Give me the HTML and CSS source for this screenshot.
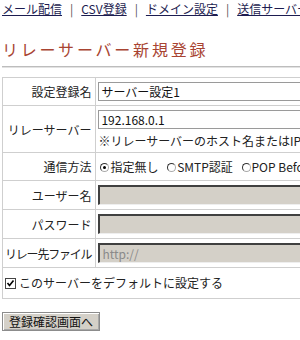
FILE: index.html
```html
<!DOCTYPE html>
<html lang="ja">
<head>
    <meta charset="UTF-8">
    <title>リレーサーバー新規登録</title>
    <link rel="stylesheet" href="styles.css">
</head>
<body>
    <div class="nav">
        <a href="#">メール配信</a><span class="sep">|</span><a href="#">CSV登録</a><span class="sep">|</span><a href="#">ドメイン設定</a><span class="sep">|</span><a href="#">送信サーバー設定</a>
    </div>
    <h1 class="title">リレーサーバー新規登録</h1>
    <div class="rule"></div>
    <table class="form">
        <tr>
            <th>設定登録名</th>
            <td><input class="text" type="text" value="サーバー設定1"></td>
        </tr>
        <tr>
            <th>リレーサーバー</th>
            <td>
                <input class="text" type="text" value="192.168.0.1">
                <div class="note">※リレーサーバーのホスト名またはIPアドレスを入力してください</div>
            </td>
        </tr>
        <tr>
            <th>通信方法</th>
            <td class="radios">
                <label><span class="radio on"></span>指定無し</label>
                <label><span class="radio"></span>SMTP認証</label>
                <label><span class="radio"></span>POP Before SMTP</label>
            </td>
        </tr>
        <tr>
            <th>ユーザー名</th>
            <td><div class="text off"></div></td>
        </tr>
        <tr>
            <th>パスワード</th>
            <td><div class="text off"></div></td>
        </tr>
        <tr>
            <th class="tight">リレー先ファイル</th>
            <td><div class="text off">http://</div></td>
        </tr>
        <tr>
            <td class="check" colspan="2">
                <span class="box"><svg width="9" height="9" viewBox="0 0 9 9"><path d="M1.5 4 L3.5 6.5 L7.5 1.5" fill="none" stroke="#000" stroke-width="1.6"/></svg></span>このサーバーをデフォルトに設定する
            </td>
        </tr>
    </table>
    <button class="submit" type="button">登録確認画面へ</button>
</body>
</html>
```

FILE: styles.css
```css
html {
    overflow: hidden;
}
body {
    margin: 0;
    padding: 1px 2px;
    background: #fff;
    color: #222;
    font-family: "Noto Sans CJK JP", sans-serif;
    font-size: 12px;
    line-height: 15px;
}
.nav {
    white-space: nowrap;
}
.nav a {
    color: #1c1c50;
    text-decoration: underline;
}
.nav .sep {
    color: #555;
    margin: 0 8px;
}
.title {
    margin: 23px 0 0;
    font-size: 16px;
    line-height: 20px;
    font-weight: normal;
    letter-spacing: 2.8px;
    color: #a84432;
    white-space: nowrap;
}
.rule {
    margin-top: 7px;
    width: 400px;
    border-top: 1px solid #bdbdbd;
    border-bottom: 1px solid #e2e2e2;
}
.form {
    margin-top: 9px;
    width: 440px;
    border-collapse: collapse;
}
.form th,
.form td {
    border: 1px solid #cfcfcf;
    padding: 4px 2px;
    white-space: nowrap;
}
.form th {
    width: 87px;
    padding-right: 4px;
    text-align: right;
    font-weight: normal;
}
.form th.tight {
    letter-spacing: -1.2px;
}
.text {
    display: block;
    box-sizing: border-box;
    width: 260px;
    height: 19px;
    margin: 0;
    padding: 0 2px;
    border: 1px solid #9a9a9a;
    font-family: "Noto Sans CJK JP", sans-serif;
    font-size: 12px;
    line-height: 17px;
    color: #111;
    background: #fff;
}
.text.off {
    height: 20px;
    background: #d4d0c8;
    color: #8a8a8a;
    border-top: 2px solid #404040;
    border-left: 2px solid #404040;
    border-bottom: 1px solid #eeeeee;
    border-right: 1px solid #eeeeee;
    line-height: 17px;
}
.note {
    margin-top: 4px;
}
.form .radios {
    padding: 6px 2px;
}
.radios label {
    margin-right: 4px;
}
.radio {
    display: inline-block;
    box-sizing: border-box;
    width: 9px;
    height: 9px;
    margin: 0 1px 0 2px;
    border: 1px solid #333;
    border-right-color: #aaa;
    border-bottom-color: #aaa;
    border-radius: 50%;
    position: relative;
    vertical-align: 0;
}
.radio.on::after {
    content: "";
    position: absolute;
    left: 2px;
    top: 2px;
    width: 3px;
    height: 3px;
    border-radius: 50%;
    background: #000;
}
.form .check {
    padding: 7px 2px 8px;
}
.box {
    display: inline-block;
    box-sizing: border-box;
    width: 11px;
    height: 11px;
    margin-right: 3px;
    border: 1px solid #444;
    background: #fff;
    vertical-align: -1px;
    line-height: 0;
}
.box svg {
    display: block;
}
.submit {
    display: block;
    margin-top: 13px;
    padding: 0 6px;
    height: 19px;
    background: #d4d0c8;
    border: 1px solid #8c8c8c;
    box-shadow: inset 1px 1px 0 #fff, inset -1px -1px 0 #a8a8a8;
    font-family: "Noto Sans CJK JP", sans-serif;
    font-size: 12px;
    line-height: 15px;
    color: #111;
}
```
